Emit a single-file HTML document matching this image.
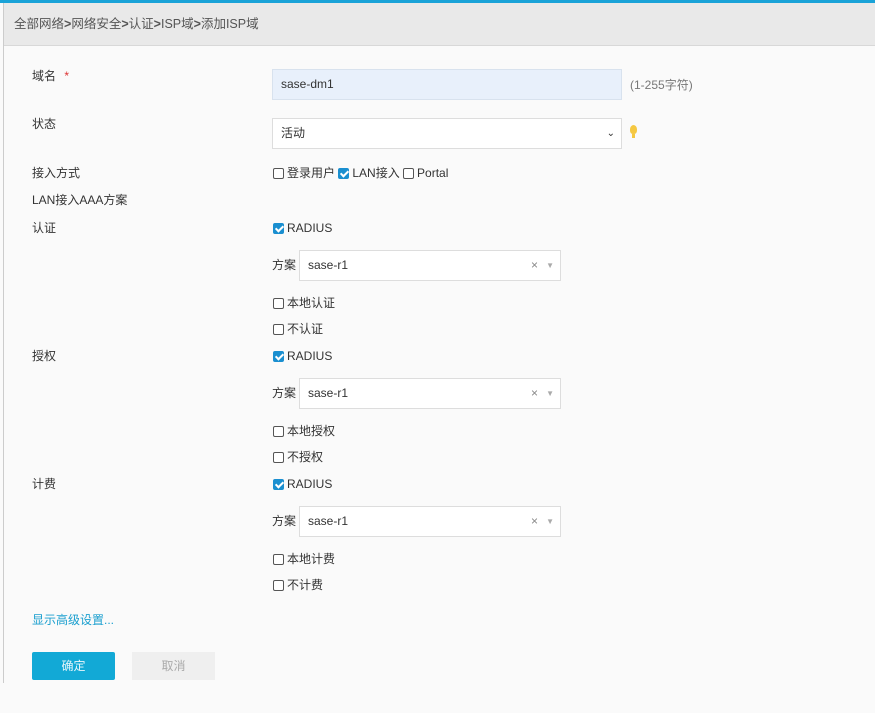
<!DOCTYPE html><html><head><meta charset="utf-8"><style>
*{margin:0;padding:0;box-sizing:border-box}
body{width:875px;height:713px;background:#fafafa;font-family:"Liberation Sans","Noto Sans CJK SC",sans-serif;font-size:12px;color:#333;position:relative;overflow:hidden}
.a{position:absolute;white-space:nowrap;line-height:14px}
.cb{display:inline-block;width:11px;height:11px;border:1px solid #555;border-radius:2px;vertical-align:-2px;margin-right:3px;background:#fff}
.ck{background:#1a8fd0;border-color:#1a8fd0;position:relative}
.ck:after{content:"";position:absolute;left:3px;top:0px;width:3px;height:6px;border:solid #fff;border-width:0 2px 2px 0;transform:rotate(45deg)}
.sel{position:absolute;border:1px solid #ddd;background:#fff;height:31px;line-height:29px;padding-left:8px;font-size:12px}
</style></head><body>
<div style="position:absolute;left:0;top:0;width:875px;height:3px;background:#1aa3d8"></div>
<div style="position:absolute;left:3px;top:3px;width:1px;height:680px;background:#ccc"></div>
<div style="position:absolute;left:4px;top:3px;width:871px;height:43px;background:#e9e9e9;border-bottom:1px solid #d8d8d8"></div>
<div class="a" style="left:14px;top:17px;font-size:12.5px;color:#555">全部网络<b>&gt;</b>网络安全<b>&gt;</b>认证<b>&gt;</b>ISP域<b>&gt;</b>添加ISP域</div>
<div class="a" style="left:32px;top:69px">域名 <span style="color:#d33;margin-left:5px">*</span></div>
<div style="position:absolute;left:272px;top:69px;width:350px;height:31px;background:#e8f0fb;border:1px solid #d8e2ee;line-height:29px;padding-left:8px">sase-dm1</div>
<div class="a" style="left:630px;top:78px;color:#777">(1-255字符)</div>
<div class="a" style="left:32px;top:117px">状态</div>
<div class="sel" style="left:272px;top:118px;width:350px">活动<span style="position:absolute;right:6px;top:0;font-size:10px">&#8964;</span></div>
<div style="position:absolute;left:630px;top:125px;width:7px;height:9px;border-radius:50% 50% 40% 40%;background:#f5c842"></div>
<div style="position:absolute;left:632px;top:134px;width:3px;height:4px;background:#f5c842"></div>
<div class="a" style="left:32px;top:166px">接入方式</div>
<div class="a" style="left:273px;top:166px"><span class="cb"></span>登录用户 <span class="cb ck"></span>LAN接入 <span class="cb"></span>Portal</div>
<div class="a" style="left:32px;top:193px">LAN接入AAA方案</div>

<div class="a" style="left:32px;top:221px">认证</div>
<div class="a" style="left:273px;top:221px"><span class="cb ck"></span>RADIUS</div>
<div class="a" style="left:272px;top:258px">方案</div>
<div class="sel" style="left:299px;top:250px;width:262px">sase-r1<span style="position:absolute;right:22px;color:#888">×</span><span style="position:absolute;right:6px;color:#aaa;font-size:8px">▼</span></div>
<div class="a" style="left:273px;top:296px"><span class="cb"></span>本地认证</div>
<div class="a" style="left:273px;top:322px"><span class="cb"></span>不认证</div>

<div class="a" style="left:32px;top:349px">授权</div>
<div class="a" style="left:273px;top:349px"><span class="cb ck"></span>RADIUS</div>
<div class="a" style="left:272px;top:386px">方案</div>
<div class="sel" style="left:299px;top:378px;width:262px">sase-r1<span style="position:absolute;right:22px;color:#888">×</span><span style="position:absolute;right:6px;color:#aaa;font-size:8px">▼</span></div>
<div class="a" style="left:273px;top:424px"><span class="cb"></span>本地授权</div>
<div class="a" style="left:273px;top:450px"><span class="cb"></span>不授权</div>

<div class="a" style="left:32px;top:477px">计费</div>
<div class="a" style="left:273px;top:477px"><span class="cb ck"></span>RADIUS</div>
<div class="a" style="left:272px;top:514px">方案</div>
<div class="sel" style="left:299px;top:506px;width:262px">sase-r1<span style="position:absolute;right:22px;color:#888">×</span><span style="position:absolute;right:6px;color:#aaa;font-size:8px">▼</span></div>
<div class="a" style="left:273px;top:552px"><span class="cb"></span>本地计费</div>
<div class="a" style="left:273px;top:578px"><span class="cb"></span>不计费</div>

<div class="a" style="left:32px;top:613px;color:#1a9fcf">显示高级设置...</div>
<div style="position:absolute;left:32px;top:652px;width:83px;height:28px;background:#12a9d6;border-radius:2px;color:#e8f6fb;text-align:center;line-height:28px">确定</div>
<div style="position:absolute;left:132px;top:652px;width:83px;height:28px;background:#efefef;color:#aaa;text-align:center;line-height:28px">取消</div>
</body></html>
